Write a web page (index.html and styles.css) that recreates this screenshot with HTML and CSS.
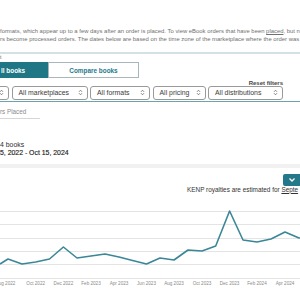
FILE: index.html
```html
<!DOCTYPE html>
<html lang="en">
  <head>
    <meta charset="UTF-8" />
    <title>Orders report</title>
    <link rel="stylesheet" href="styles.css">
  </head>
  <body>
    <!-- notice -->
    <div class="notice">
      <p>formats, which appear up to a few days after an order is placed. To view eBook orders that have been <a href="#">placed</a>, but n</p>
      <p>rs become processed orders. The dates below are based on the time zone of the marketplace where the order was r</p>
    </div>
    <div class="rule"></div>
    <div class="view-label">t</div>

    <!-- view tabs -->
    <div class="tabs">
      <div class="tab active">ll books</div>
      <div class="tab">Compare books</div>
    </div>

    <!-- filters -->
    <div class="filters">
      <div class="reset">Reset filters</div>
      <div class="selects">
        <div class="select w-cut"><span></span><svg class="arrows" width="5" height="7" viewBox="0 0 5 7"><path d="M1 2.8 L2.5 1.2 L4 2.8 M1 4.2 L2.5 5.8 L4 4.2" /></svg></div>
        <div class="select w-market">All marketplaces <svg class="arrows" width="5" height="7" viewBox="0 0 5 7"><path d="M1 2.8 L2.5 1.2 L4 2.8 M1 4.2 L2.5 5.8 L4 4.2" /></svg></div>
        <div class="select w-format">All formats <svg class="arrows" width="5" height="7" viewBox="0 0 5 7"><path d="M1 2.8 L2.5 1.2 L4 2.8 M1 4.2 L2.5 5.8 L4 4.2" /></svg></div>
        <div class="select w-pricing">All pricing <svg class="arrows" width="5" height="7" viewBox="0 0 5 7"><path d="M1 2.8 L2.5 1.2 L4 2.8 M1 4.2 L2.5 5.8 L4 4.2" /></svg></div>
        <div class="select w-dist">All distributions <svg class="arrows" width="5" height="7" viewBox="0 0 5 7"><path d="M1 2.8 L2.5 1.2 L4 2.8 M1 4.2 L2.5 5.8 L4 4.2" /></svg></div>
      </div>
    </div>
    <div class="teal-line"></div>

    <div class="subtabs">
      <div class="subtab">rs Placed</div>
    </div>

    <div class="summary">
      <div class="count">4 books</div>
      <div class="range">5, 2022 - Oct 15, 2024</div>
    </div>

    <div class="band"></div>

    <div class="toolbar">
      <div class="view-btn">
        <svg width="8" height="6" viewBox="0 0 8 6"><path d="M1.5 1.5 L4 4 L6.5 1.5" /></svg>
      </div>
    </div>
    <div class="kenp">KENP royalties are estimated for <a href="#">Septe</a></div>

    <!-- chart -->
    <svg class="chart" width="300" height="100" viewBox="0 0 300 100">
      <g stroke="#e4e4e4" stroke-width="1">
        <line x1="0" y1="15.5" x2="300" y2="15.5" />
        <line x1="0" y1="28.5" x2="300" y2="28.5" />
        <line x1="0" y1="42.5" x2="300" y2="42.5" />
        <line x1="0" y1="55.5" x2="300" y2="55.5" />
        <line x1="0" y1="68.5" x2="300" y2="68.5" />
        <line x1="0" y1="82.5" x2="300" y2="82.5" />
      </g>
      <polyline fill="none" stroke="#3b8797" stroke-width="1.6" stroke-linejoin="round"
        points="0,68 8,63 22,68 35.7,66 49.5,63 63.4,51 77,62 91,60 105,58 119,61 132.6,64.5 146.5,68 160,62 174,64 188,54 202,55 215.7,50 229.6,15 243,44 257,46 271,43 285,36 299,42 306,40" />
      <g class="axis" fill="#8a8a8a" font-size="4.6" text-anchor="middle">
        <text x="7" y="88.5">ug 2022</text>
        <text x="35.7" y="88.5">Oct 2022</text>
        <text x="63.4" y="88.5">Dec 2022</text>
        <text x="91" y="88.5">Feb 2023</text>
        <text x="119" y="88.5">Apr 2023</text>
        <text x="146.5" y="88.5">Jun 2023</text>
        <text x="174" y="88.5">Aug 2023</text>
        <text x="202" y="88.5">Oct 2023</text>
        <text x="229.6" y="88.5">Dec 2023</text>
        <text x="257" y="88.5">Feb 2024</text>
        <text x="285" y="88.5">Apr 2024</text>
      </g>
    </svg>
  </body>
</html>
```

FILE: styles.css
```css
/* page */
body {
  margin: 0;
  width: 300px;
  overflow: hidden;
  font-family: "Liberation Sans", Arial, sans-serif;
  color: #333;
  background: #fff;
}
a {
  color: inherit;
}

/* notice text */
.notice {
  padding-top: 27px;
  font-size: 5.9px;
  line-height: 8px;
  color: #6f6f6f;
  white-space: nowrap;
}
.notice p {
  margin: 0;
}
.rule {
  height: 2px;
  margin-top: 9px;
  background-color: #d3e1e4;
}
.view-label {
  height: 8px;
  font-size: 5px;
  line-height: 6px;
  color: #666;
}

/* tabs */
.tabs {
  display: flex;
  height: 16px;
}
.tab {
  display: flex;
  align-items: center;
  justify-content: center;
  width: 89px;
  border: 1px solid #a9b7ba;
  font-size: 6.4px;
  font-weight: bold;
  color: #23798a;
}
.tab.active {
  width: 46px;
  justify-content: flex-start;
  border-color: #1f7685;
  background-color: #1f7685;
  color: #fff;
}

/* filters */
.filters {
  margin-top: 1.5px;
}
.reset {
  padding-right: 17px;
  text-align: right;
  font-size: 6px;
  font-weight: bold;
  line-height: 6px;
  color: #444;
}
.selects {
  display: flex;
  gap: 2.5px;
}
.select {
  display: flex;
  align-items: center;
  justify-content: space-between;
  height: 14px;
  padding: 0 4px 0 6px;
  border: 1px solid #9a9a9a;
  border-radius: 3px;
  box-sizing: border-box;
  font-size: 6.9px;
  color: #3a3a3a;
  white-space: nowrap;
}
.w-cut {
  width: 20px;
  margin-left: -11px;
}
.w-market { width: 76px; }
.w-format { width: 60px; }
.w-pricing { width: 53px; }
.w-dist { width: 75px; }
.arrows {
  fill: none;
  stroke: #666;
  stroke-width: 0.8;
}
.teal-line {
  height: 1px;
  margin-top: 1.5px;
  background-color: #6ea3ad;
}

/* sub tabs */
.subtabs {
  margin-top: 6px;
}
.subtab {
  width: 40px;
  padding-bottom: 2.5px;
  border-bottom: 1px solid #d6d6d6;
  font-size: 6.3px;
  line-height: 7px;
  color: #8a8a8a;
}

/* summary */
.summary {
  margin-top: 22px;
  font-size: 6.9px;
  line-height: 8px;
  color: #222;
}
.count {
  color: #2e2e2e;
}
.range {
  color: #1e1e1e;
  -webkit-text-stroke: 0.15px #1e1e1e;
}
.band {
  height: 4px;
  margin-top: 7px;
  background-color: #f1f1f1;
}

/* chart header */
.toolbar {
  display: flex;
  justify-content: flex-end;
  margin-top: 6px;
}
.view-btn {
  display: flex;
  align-items: center;
  justify-content: center;
  width: 17px;
  height: 12px;
  border-radius: 2px 0 0 2px;
  background-color: #23798a;
}
.view-btn svg {
  fill: none;
  stroke: #fff;
  stroke-width: 1.3;
}
.kenp {
  padding-left: 187px;
  font-size: 6.4px;
  line-height: 7px;
  white-space: nowrap;
  color: #333;
}
.chart {
  display: block;
  margin-top: 3px;
}
.axis {
  font-family: "Liberation Sans", Arial, sans-serif;
}
```
